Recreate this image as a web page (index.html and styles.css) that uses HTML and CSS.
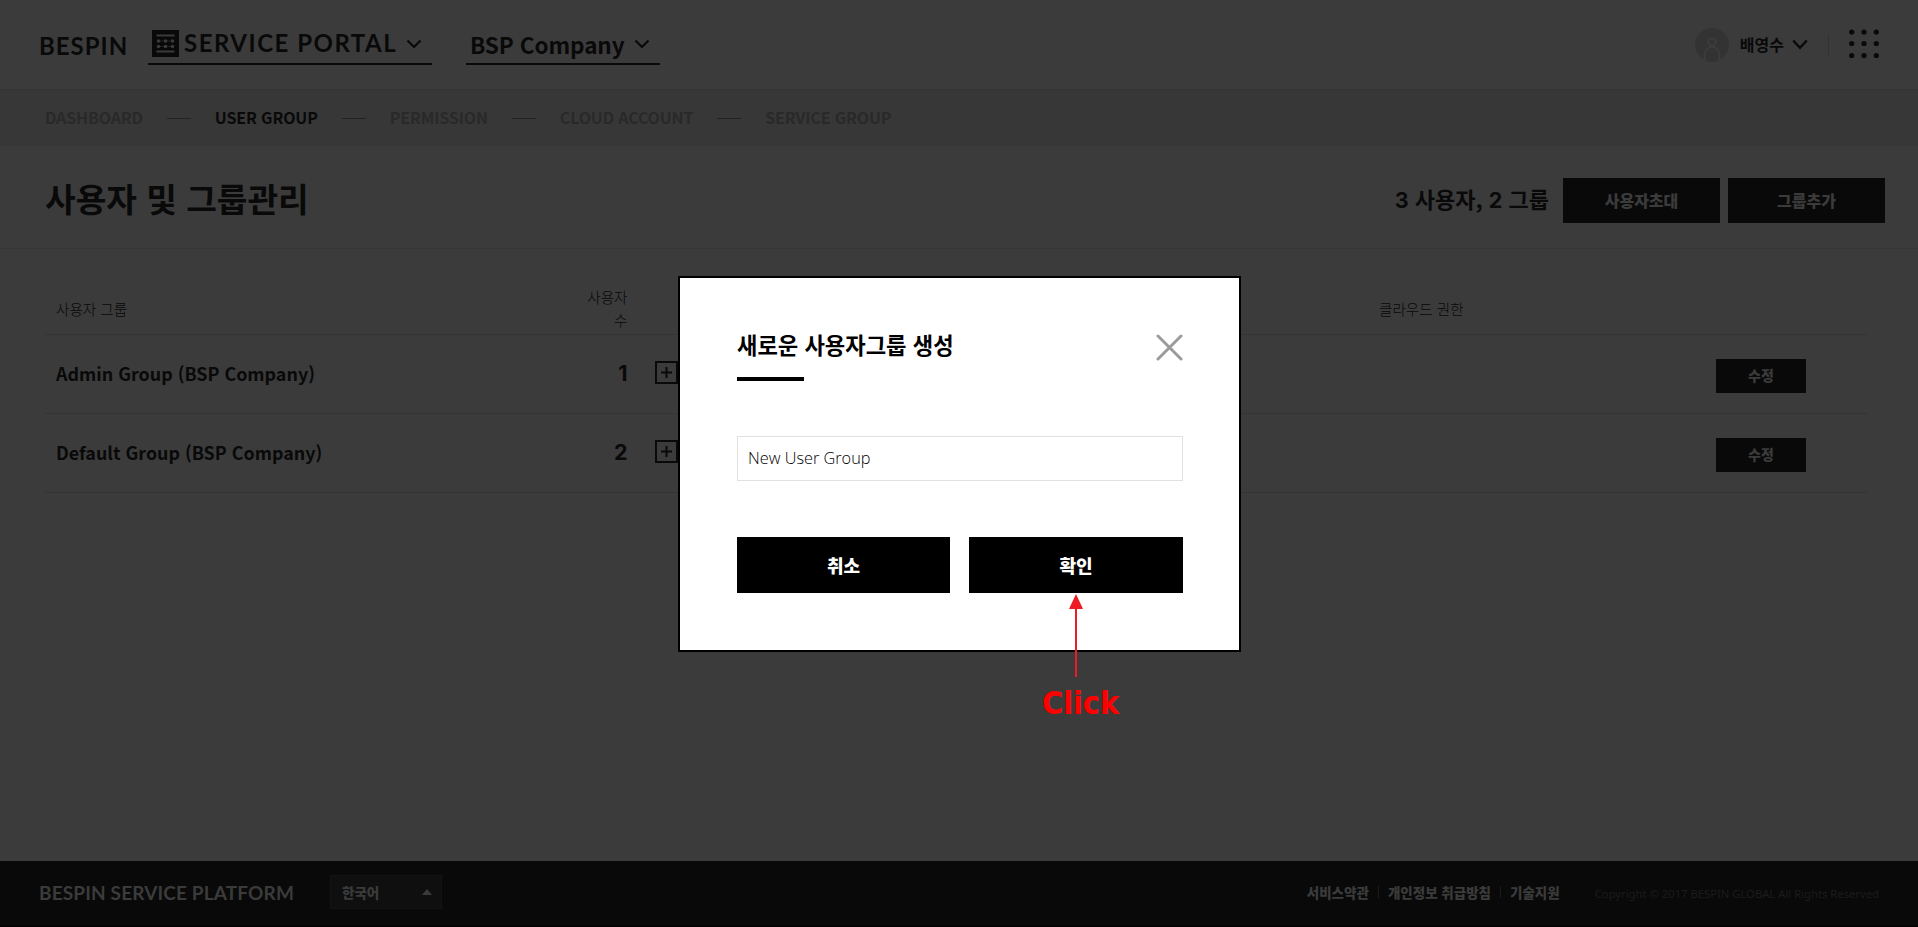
FILE: index.html
```html
<!DOCTYPE html>
<html lang="ko">
<head>
<meta charset="utf-8">
<title>Bespin Service Portal</title>
<link rel="stylesheet" href="styles.css">
</head>
<body>
<div class="page">
  <header class="header">
    <span class="brand">BESPIN</span>
    <div class="switcher switcher-portal">
      <svg class="portal-icon" width="27" height="27" viewBox="0 0 27 27"><path fill="#090909" d="M0 0h27v27H0z"/><path stroke="#3b3b3b" stroke-width="2" d="M4.500 5.500h18M4.500 21.500h18"/><path stroke="#3b3b3b" stroke-width="1" d="M5 11h17M5 16.500h17" opacity=".5"/><g fill="#3b3b3b"><circle cx="6.500" cy="11" r="1.800"/><circle cx="13.500" cy="11" r="1.800"/><circle cx="20.500" cy="11" r="1.800"/><circle cx="6.500" cy="16.500" r="1.800"/><circle cx="13.500" cy="16.500" r="1.800"/><circle cx="20.500" cy="16.500" r="1.800"/></g></svg>
      <span class="portal-name">SERVICE PORTAL</span>
      <svg class="chev" width="16" height="10" viewBox="0 0 16 10"><path d="M1.500 1.500 8 8l6.500-6.500"/></svg>
    </div>
    <div class="switcher switcher-company">
      <span class="company-name">BSP Company</span>
      <svg class="chev" width="16" height="10" viewBox="0 0 16 10"><path d="M1.500 1.500 8 8l6.500-6.500"/></svg>
    </div>
    <div class="account">
      <svg width="34" height="34" viewBox="0 0 34 34"><circle cx="17" cy="17" r="17" fill="#333"/><g fill="none" stroke="#3e3e3e" stroke-width="1.500"><circle cx="17" cy="14" r="3.700"/><path d="M9.500 32v-5.500a7.500 7.500 0 0 1 15 0V32"/></g></svg>
      <span class="user-name">배영수</span>
      <svg class="user-chev" width="16" height="11" viewBox="0 0 16 11"><path d="M1.200 1.500 8 8.700l6.800-7.200"/></svg>
      <i class="divider"></i>
      <svg width="30" height="30" viewBox="0 0 30 30" fill="#090909"><circle cx="2.700" cy="3" r="2.600"/><circle cx="15" cy="3" r="2.600"/><circle cx="27.300" cy="3" r="2.600"/><circle cx="2.700" cy="14.500" r="2.600"/><circle cx="15" cy="14.500" r="2.600"/><circle cx="27.300" cy="14.500" r="2.600"/><circle cx="2.700" cy="26.500" r="2.600"/><circle cx="15" cy="26.500" r="2.600"/><circle cx="27.300" cy="26.500" r="2.600"/></svg>
    </div>
  </header>

  <nav class="nav">
    <span>DASHBOARD</span><i></i><span class="active">USER GROUP</span><i></i><span>PERMISSION</span><i></i><span>CLOUD ACCOUNT</span><i></i><span>SERVICE GROUP</span>
  </nav>

  <section class="titlebar">
    <h1>사용자 및 그룹관리</h1>
    <span class="summary"><b>3</b> 사용자, <b>2</b> 그룹</span>
    <span class="btn">사용자초대</span>
    <span class="btn">그룹추가</span>
  </section>

  <main class="table">
    <div class="row head">
      <span>사용자 그룹</span><span class="count">사용자<br>수</span><span></span><span class="cloud">클라우드 권한</span><span></span>
    </div>
    <div class="row">
      <span class="group">Admin Group (BSP Company)</span><span class="count num">1</span>
      <svg class="plus" width="23" height="23" viewBox="0 0 23 23"><path d="M1 1h21v21H1zM11.500 6v11M6 11.500h11"/></svg>
      <span></span><span class="edit">수정</span>
    </div>
    <div class="row">
      <span class="group">Default Group (BSP Company)</span><span class="count num">2</span>
      <svg class="plus" width="23" height="23" viewBox="0 0 23 23"><path d="M1 1h21v21H1zM11.500 6v11M6 11.500h11"/></svg>
      <span></span><span class="edit">수정</span>
    </div>
  </main>

  <footer class="footer">
    <span class="platform">BESPIN SERVICE PLATFORM</span>
    <div class="lang"><span>한국어</span><svg width="10" height="6" viewBox="0 0 10 6"><path fill="#3b3b3b" d="M5 0l5 6H0z"/></svg></div>
    <div class="links"><span>서비스약관</span><i></i><span>개인정보 취급방침</span><i></i><span>기술지원</span></div>
    <span class="copyright">Copyright © 2017 BESPIN GLOBAL All Rights Reserved</span>
  </footer>
</div>

<div class="modal">
  <div class="modal-head">
    <h2>새로운 사용자그룹 생성</h2>
    <svg width="27" height="27" viewBox="0 0 27 27"><path d="M2 2l23 23M25 2 2 25" stroke="#9b9b9b" stroke-width="3" stroke-linecap="round"/></svg>
  </div>
  <div class="field">New User Group</div>
  <div class="actions"><span>취소</span><span>확인</span></div>
</div>

<div class="callout">
  <svg width="14" height="83" viewBox="0 0 14 83"><path fill="#ed1c24" d="M7 0l7 15H0zM6 15h2v68H6z"/></svg>
  <span>Click</span>
</div>
</body>
</html>
```
FILE: styles.css
```css
* { box-sizing: border-box; }
body {
  margin: 0;
  font-family: "Noto Sans CJK KR", sans-serif;
  color: #090909;
  background: #3b3b3b;
  overflow: hidden;
}
svg { display: block; flex: none; }
.page { display: flex; flex-direction: column; height: 927px; }
span { white-space: nowrap; }

.header {
  display: flex;
  align-items: flex-start;
  flex: none;
  height: 90px;
  padding: 25px 39px 0 39px;
  border-bottom: 1px solid #333;
}
.brand {
  width: 109px;
  font: 700 24px/41px Lato, sans-serif;
  letter-spacing: 1px;
}
.switcher {
  display: flex;
  align-items: center;
  height: 40px;
  border-bottom: 2px solid #090909;
}
.switcher-portal { width: 284px; padding-left: 4px; margin-right: 34px; }
.switcher-company { width: 194px; padding-left: 4px; }
.portal-icon { margin-top: -1px; margin-right: 5px; }
.portal-name {
  width: 222px;
  margin-top: -2px;
  font: 700 24px/36px Lato, sans-serif;
  letter-spacing: 1.500px;
}
.company-name { width: 164px; font: 700 22.500px/38px "Noto Sans CJK KR", sans-serif; letter-spacing: -0.100px; }
.chev { fill: none; stroke: #090909; stroke-width: 2.2; }
.account {
  display: flex;
  align-items: center;
  height: 34px;
  margin: 3px 0 0 auto;
}
.user-name { margin: -3px 8px 0 11px; font-weight: 700; font-size: 16px; line-height: 34px; }
.user-chev { margin-top: -2px; fill: none; stroke: #090909; stroke-width: 2.4; }
.divider { width: 1px; height: 23px; background: #333; margin: 0 20px; }
.divider + svg { margin-top: -2px; }

.nav {
  display: flex;
  align-items: center;
  flex: none;
  height: 56px;
  padding: 0 45px 2px;
  background: #373737;
  color: #292929;
  font-weight: 700;
  font-size: 16px;
  letter-spacing: -0.150px;
}
.nav i { width: 24px; height: 1px; margin: 2px 24px 0; background: #222; }
.nav .active { color: #090909; }

.titlebar {
  display: flex;
  align-items: center;
  flex: none;
  height: 103px;
  padding: 6px 33px 0 45px;
  border-bottom: 1px solid #363636;
}
h1 { margin: -4px auto 0 0; font-weight: 700; font-size: 33.300px; line-height: 50px; }
.summary { margin: -4px 14px 0 0; font-weight: 700; font-size: 22px; }
.summary b { font-family: Inter, sans-serif; font-weight: 700; font-size: 21.500px; }
.btn {
  width: 157px;
  height: 45px;
  margin-left: 8px;
  background: #090909;
  color: #3b3b3b;
  font-weight: 900;
  font-size: 16px;
  line-height: 44px;
  text-align: center;
}
.summary + .btn { margin-left: 0; }

.table { flex: 1; padding: 27px 50px 0 45px; }
.row {
  display: grid;
  grid-template-columns: 482px 100px 725px 353px 90px;
  align-items: center;
  height: 79px;
  padding-left: 11px;
  border-bottom: 1px solid #343434;
}
.head { height: 59px; padding-top: 6px; font-weight: 300; font-size: 14.600px; line-height: 23px; }
.count { text-align: right; padding-right: 10.500px; }
.cloud { padding-left: 16px; }
.group { margin-top: -2px; font-weight: 700; font-size: 17.900px; }
.num { margin-top: -2px; font: 700 21.500px/24px Inter, sans-serif; }
.plus { margin: -3px 0 0 17px; fill: none; stroke: #090909; stroke-width: 2; }
.edit {
  height: 34px;
  margin-top: 4px;
  background: #090909;
  color: #3b3b3b;
  font-weight: 900;
  font-size: 14px;
  line-height: 33px;
  text-align: center;
}

.footer {
  display: flex;
  align-items: center;
  flex: none;
  height: 66px;
  padding: 0 39px;
  background: #090909;
  border-bottom: 1px solid #000;
  color: #3b3b3b;
}
.platform { width: 291px; margin-top: -2px; font: 700 19px/30px Lato, sans-serif; letter-spacing: 0.150px; }
.lang {
  display: flex;
  align-items: center;
  justify-content: space-between;
  width: 112px;
  height: 34px;
  margin-bottom: 3px;
  padding: 0 9px 0 11px;
  background: #0f0f0f;
  border: 1px solid #131313;
  font-weight: 900;
  font-size: 13.500px;
}
.links { display: flex; align-items: center; margin: -3px 0 0 auto; font-weight: 900; font-size: 13.500px; }
.links i { width: 1px; height: 12px; margin: 0 9px; background: #1a1a1a; }
.copyright { margin: 1px 0 0 35px; font: 400 11.250px/20px "Noto Sans", sans-serif; color: #1c1c1c; }

.modal {
  position: absolute;
  left: 678px;
  top: 276px;
  width: 563px;
  height: 376px;
  padding: 49px 56px 0 57px;
  background: #fff;
  border: 2px solid #000;
  color: #000;
}
.modal-head { display: flex; justify-content: space-between; height: 109px; }
.modal-head svg { margin-top: 7px; }
h2 { margin: 0; font-weight: 700; font-size: 22.200px; line-height: 34px; }
h2::after { content: ""; display: block; width: 67px; height: 4px; margin-top: 16px; background: #000; }
.field {
  height: 45px;
  padding-left: 10px;
  border: 1px solid #e1e1e1;
  font: 300 16.300px/43px "Open Sans", sans-serif;
}
.actions { display: grid; grid-template-columns: 213px 214px; gap: 19px; margin-top: 56px; }
.actions span {
  height: 56px;
  background: #000;
  color: #fff;
  font-weight: 900;
  font-size: 18px;
  line-height: 56px;
  text-align: center;
}
.callout { position: absolute; left: 1042px; top: 594px; color: #f00; }
.callout svg { margin-left: 27px; }
.callout span {
  display: block;
  margin-top: 8px;
  font: 700 32px/37px "DejaVu Sans Condensed", "DejaVu Sans", sans-serif;
  font-stretch: condensed;
}
```
